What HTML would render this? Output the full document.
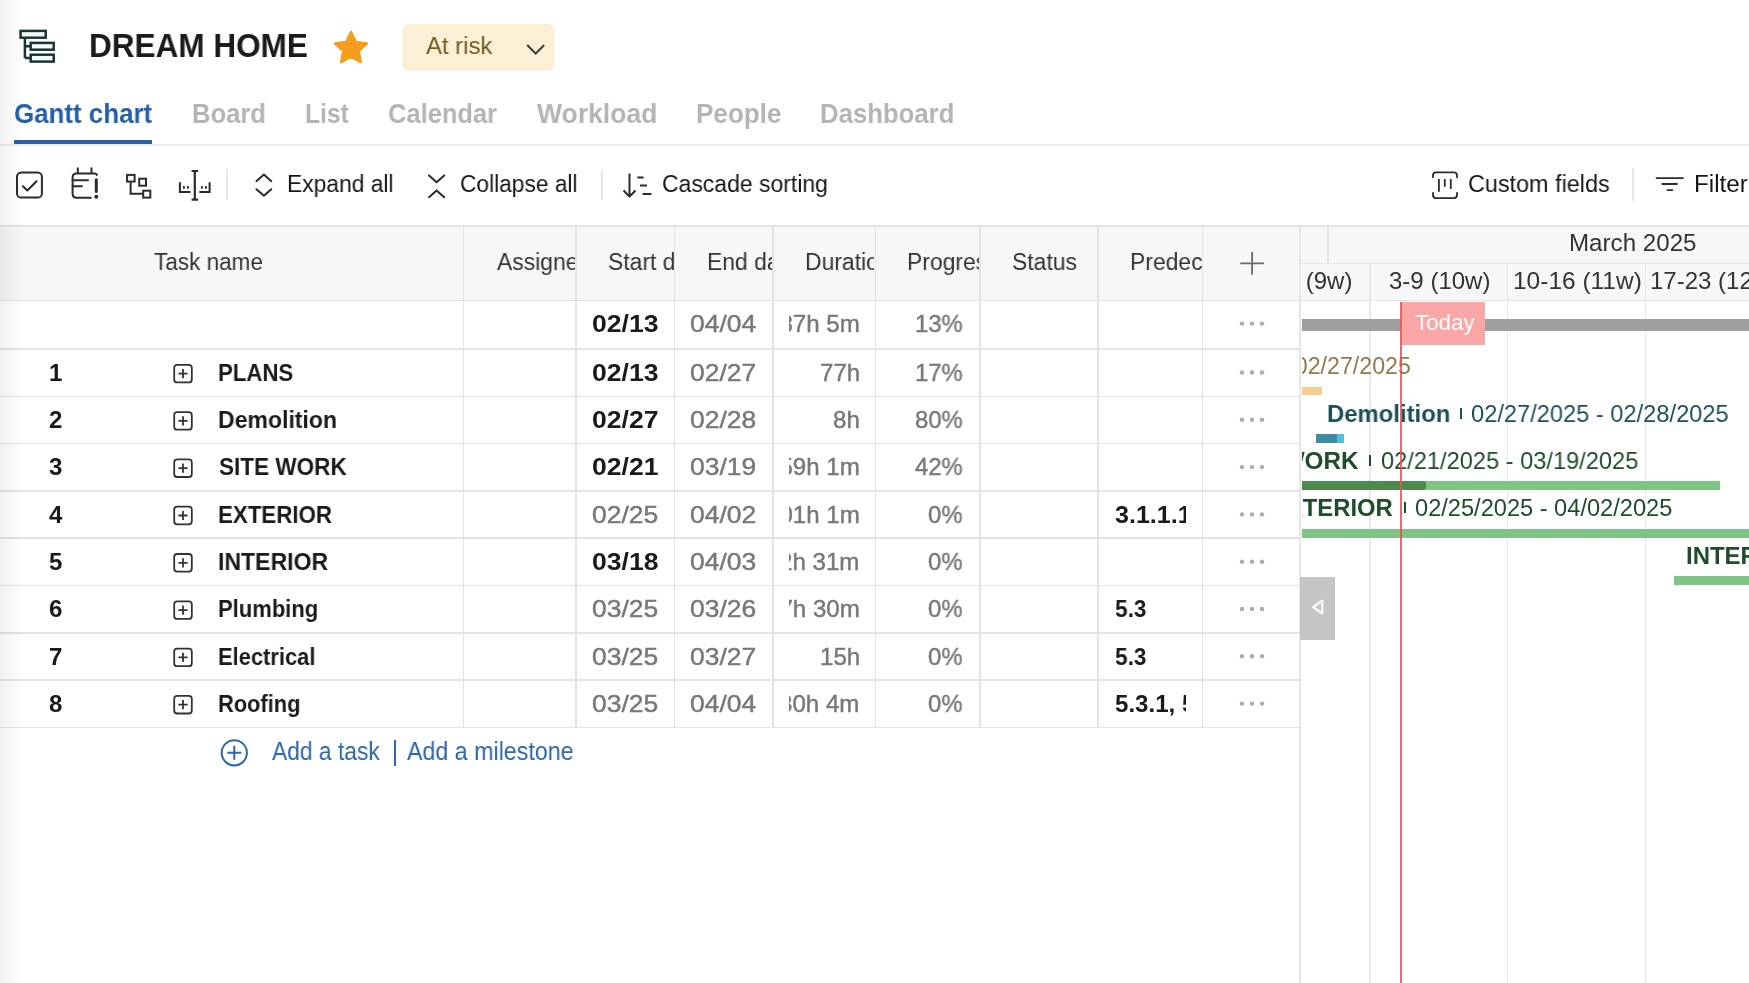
<!DOCTYPE html>
<html><head><meta charset='utf-8'><style>
html,body{margin:0;padding:0;background:#fff;width:1749px;height:983px;overflow:hidden;position:relative}
body{font-family:"Liberation Sans", sans-serif}
.t{position:absolute;white-space:nowrap;transform-origin:0 0;will-change:transform}
</style></head><body>
<div style='position:absolute;left:0.00px;top:226.00px;width:1300.00px;height:74.50px;background:#f7f7f7;'></div><div style='position:absolute;left:1300.00px;top:226.00px;width:449.00px;height:74.50px;background:#f7f7f7;'></div><svg style='position:absolute;left:0;top:0' width='1749' height='983' viewBox='0 0 1749 983'>
<g fill='none' stroke='#1b3434' stroke-width='2.5'>
<rect x='20.6' y='30.9' width='25.1' height='6.8' fill='#f3fafa'/>
<rect x='30.7' y='42.9' width='23.0' height='6.8' fill='#f3fafa'/>
<rect x='30.7' y='54.7' width='23.0' height='6.9' fill='#f3fafa'/>
<path d='M24.9 37.7 V57.9 M24.9 46.3 H30.7 M24.9 57.9 H30.7'/>
</g>
<path d='M351.00 32.00 L355.70 42.13 L366.79 43.47 L358.61 51.07 L360.76 62.03 L351.00 56.60 L341.24 62.03 L343.39 51.07 L335.21 43.47 L346.30 42.13 Z' fill='#f59d1c' stroke='#f59d1c' stroke-width='2.6' stroke-linejoin='round'/>
<rect x='402.3' y='24.1' width='152.3' height='46.7' rx='7' fill='#fbf0d5'/>
<path d='M527.2 45 L535.7 53.6 L544.2 45' fill='none' stroke='#3a3a3a' stroke-width='2'/>
</svg><div class='t' style='left:88.59px;top:29px;font-size:33.28px;line-height:33.28px;font-weight:bold;color:#1b1b1b;transform:scaleX(0.9477);'>DREAM HOME</div><div class='t' style='left:425.55px;top:34px;font-size:24.42px;line-height:24.42px;font-weight:normal;color:#6e5b25;transform:scaleX(0.9792);'>At risk</div><div class='t' style='left:14.04px;top:100px;font-size:27.91px;line-height:27.91px;font-weight:bold;color:#2161aa;transform:scaleX(0.9282);'>Gantt chart</div><div class='t' style='left:191.99px;top:100px;font-size:27.91px;line-height:27.91px;font-weight:bold;color:#b4b4b4;transform:scaleX(0.9166);'>Board</div><div class='t' style='left:304.65px;top:100px;font-size:27.91px;line-height:27.91px;font-weight:bold;color:#b4b4b4;transform:scaleX(0.8837);'>List</div><div class='t' style='left:387.76px;top:100px;font-size:27.91px;line-height:27.91px;font-weight:bold;color:#b4b4b4;transform:scaleX(0.9130);'>Calendar</div><div class='t' style='left:537.17px;top:100px;font-size:27.91px;line-height:27.91px;font-weight:bold;color:#b4b4b4;transform:scaleX(0.9505);'>Workload</div><div class='t' style='left:695.56px;top:100px;font-size:27.91px;line-height:27.91px;font-weight:bold;color:#b4b4b4;transform:scaleX(0.9325);'>People</div><div class='t' style='left:819.88px;top:100px;font-size:27.91px;line-height:27.91px;font-weight:bold;color:#b4b4b4;transform:scaleX(0.9215);'>Dashboard</div><div style='position:absolute;left:13.90px;top:140.10px;width:138.10px;height:3.60px;background:#2562aa;'></div><div style='position:absolute;left:0.00px;top:144.20px;width:1749.00px;height:1.60px;background:#efefef;'></div><svg style='position:absolute;left:0;top:0' width='1749' height='983' viewBox='0 0 1749 983'>
<g fill='none' stroke='#2b2b2b' stroke-width='2' stroke-linecap='round' stroke-linejoin='round'>
<rect x='17' y='172.4' width='24.9' height='25.2' rx='4.2'/>
<path d='M22.9 186.3 L27.3 190.5 L36.6 181.2'/>
<path d='M90.9 197.7 H76.6 Q72.6 197.7 72.6 193.7 V177.4 Q72.6 173.4 76.6 173.4 H95 Q96.8 173.6 96.8 175'/>
<path d='M77.8 168.2 V173 M91.5 168.2 V173 M72.6 180.3 H88 M72.6 186.3 H81.9'/>
<path d='M96.3 179.8 V191.6' stroke-width='3'/>
<circle cx='96.3' cy='196.8' r='2' fill='#2b2b2b' stroke='none'/>
<rect x='127.1' y='174.9' width='7.5' height='6.7' stroke-linecap='butt' stroke-linejoin='miter'/>
<rect x='139.2' y='178.7' width='6.8' height='7' stroke-linecap='butt' stroke-linejoin='miter'/>
<rect x='143.2' y='190.7' width='7.1' height='6.9' stroke-linecap='butt' stroke-linejoin='miter'/>
<path d='M130.6 182.6 V193.7 H143.2' stroke-linecap='butt' stroke-linejoin='miter'/>
<path d='M194.8 171 V199.6 M191.6 171 H198.2 M191.6 199.6 H198.2' stroke-width='2.2' stroke-linecap='butt'/>
<path d='M179.9 182.2 V192 H190.5 M209.6 182.2 V192 H199.3' stroke-linecap='butt' stroke-linejoin='miter'/>
<path d='M183.9 186.1 V188.7 M187.9 186.1 V188.7 M201.9 186.1 V188.7 M205.9 186.1 V188.7' stroke-width='1.8' stroke-linecap='butt'/>
<path d='M256.4 181.2 L263.9 174.6 L271.3 181.2 M256.4 189.2 L263.9 195.8 L271.3 189.2'/>
<path d='M429 175.4 L436.6 182.2 L444.2 175.4 M429 197.2 L436.6 190.4 L444.2 197.2'/>
<path d='M629.5 173.5 V196.5 M623.5 190.5 L629.5 196.5 L635.5 190.5 M637.3 177.4 H643.6 M640 185.6 H647 M642.6 193.9 H651.4' stroke-linecap='butt'/>
<path d='M1433 177.3 V175.4 Q1433 172.4 1436 172.4 H1454 Q1457 172.4 1457 175.4 V177.3 M1433 192.8 V195.1 Q1433 198.1 1436 198.1 H1454 Q1457 198.1 1457 195.1 V192.8' stroke-width='1.8'/>
<path d='M1438.9 179.6 V191 M1444.8 179.6 V186.1 M1450.8 179.6 V188.2' stroke-width='1.8'/>
<path d='M1656.5 178.1 H1683 M1662.3 184 H1677 M1667.5 190.2 H1672.3' stroke-width='1.8'/>
</g>
</svg><div style='position:absolute;left:226.20px;top:168.70px;width:1.80px;height:31.30px;background:#e6e6e6;'></div><div style='position:absolute;left:600.80px;top:170.00px;width:1.80px;height:30.00px;background:#e6e6e6;'></div><div style='position:absolute;left:1632.20px;top:168.10px;width:1.80px;height:32.50px;background:#e6e6e6;'></div><div class='t' style='left:287.13px;top:172px;font-size:23.98px;line-height:23.98px;font-weight:normal;color:#161616;transform:scaleX(0.9518);'>Expand all</div><div class='t' style='left:459.94px;top:172px;font-size:23.98px;line-height:23.98px;font-weight:normal;color:#161616;transform:scaleX(0.9485);'>Collapse all</div><div class='t' style='left:661.83px;top:172px;font-size:23.98px;line-height:23.98px;font-weight:normal;color:#161616;transform:scaleX(0.9581);'>Cascade sorting</div><div class='t' style='left:1467.61px;top:172px;font-size:23.98px;line-height:23.98px;font-weight:normal;color:#161616;transform:scaleX(0.9756);'>Custom fields</div><div class='t' style='left:1693.61px;top:172px;font-size:23.98px;line-height:23.98px;font-weight:normal;color:#161616;transform:scaleX(1.0130);'>Filter</div><div style='position:absolute;left:0.00px;top:225.20px;width:1749.00px;height:1.60px;background:#e4e4e4;'></div><div style='position:absolute;left:0.00px;top:299.80px;width:1300.00px;height:1.60px;background:#e4e4e4;'></div><div style='position:absolute;left:0.00px;top:348.20px;width:1300.00px;height:1.60px;background:#e4e4e4;'></div><div style='position:absolute;left:0.00px;top:395.50px;width:1300.00px;height:1.60px;background:#e4e4e4;'></div><div style='position:absolute;left:0.00px;top:442.80px;width:1300.00px;height:1.60px;background:#e4e4e4;'></div><div style='position:absolute;left:0.00px;top:490.10px;width:1300.00px;height:1.60px;background:#e4e4e4;'></div><div style='position:absolute;left:0.00px;top:537.40px;width:1300.00px;height:1.60px;background:#e4e4e4;'></div><div style='position:absolute;left:0.00px;top:584.70px;width:1300.00px;height:1.60px;background:#e4e4e4;'></div><div style='position:absolute;left:0.00px;top:632.00px;width:1300.00px;height:1.60px;background:#e4e4e4;'></div><div style='position:absolute;left:0.00px;top:679.30px;width:1300.00px;height:1.60px;background:#e4e4e4;'></div><div style='position:absolute;left:0.00px;top:726.60px;width:1300.00px;height:1.60px;background:#e4e4e4;'></div><div style='position:absolute;left:462.70px;top:226.00px;width:1.60px;height:502.20px;background:#e4e4e4;'></div><div style='position:absolute;left:575.20px;top:226.00px;width:1.60px;height:502.20px;background:#e4e4e4;'></div><div style='position:absolute;left:673.70px;top:226.00px;width:1.60px;height:502.20px;background:#e4e4e4;'></div><div style='position:absolute;left:772.20px;top:226.00px;width:1.60px;height:502.20px;background:#e4e4e4;'></div><div style='position:absolute;left:874.50px;top:226.00px;width:1.60px;height:502.20px;background:#e4e4e4;'></div><div style='position:absolute;left:979.20px;top:226.00px;width:1.60px;height:502.20px;background:#e4e4e4;'></div><div style='position:absolute;left:1097.00px;top:226.00px;width:1.60px;height:502.20px;background:#e4e4e4;'></div><div style='position:absolute;left:1201.70px;top:226.00px;width:1.60px;height:502.20px;background:#e4e4e4;'></div><div style='position:absolute;left:1299.30px;top:226.00px;width:2.20px;height:757.00px;background:#e6e6e6;'></div><div class='t' style='left:153.50px;top:250px;font-size:24.42px;line-height:24.42px;font-weight:normal;color:#333;transform:scaleX(0.9231);'>Task name</div><div class='t' style='left:1012.17px;top:250px;font-size:24.42px;line-height:24.42px;font-weight:normal;color:#333;transform:scaleX(0.9383);'>Status</div><div style='position:absolute;left:464.4px;top:226px;width:110.70000000000005px;height:74px;overflow:hidden'><div style='position:absolute;left:-464.4px;top:-226px'><div class='t' style='left:496.85px;top:250px;font-size:24.42px;line-height:24.42px;font-weight:normal;color:#333;transform:scaleX(0.9383);'>Assignee</div></div></div><div style='position:absolute;left:576.9px;top:226px;width:96.70000000000005px;height:74px;overflow:hidden'><div style='position:absolute;left:-576.9px;top:-226px'><div class='t' style='left:608.27px;top:250px;font-size:24.42px;line-height:24.42px;font-weight:normal;color:#333;transform:scaleX(0.9383);'>Start date</div></div></div><div style='position:absolute;left:675.4px;top:226px;width:96.70000000000005px;height:74px;overflow:hidden'><div style='position:absolute;left:-675.4px;top:-226px'><div class='t' style='left:706.62px;top:250px;font-size:24.42px;line-height:24.42px;font-weight:normal;color:#333;transform:scaleX(0.9383);'>End date</div></div></div><div style='position:absolute;left:773.9px;top:226px;width:100.5px;height:74px;overflow:hidden'><div style='position:absolute;left:-773.9px;top:-226px'><div class='t' style='left:804.82px;top:250px;font-size:24.42px;line-height:24.42px;font-weight:normal;color:#333;transform:scaleX(0.9383);'>Duration</div></div></div><div style='position:absolute;left:876.2px;top:226px;width:102.89999999999998px;height:74px;overflow:hidden'><div style='position:absolute;left:-876.2px;top:-226px'><div class='t' style='left:907.32px;top:250px;font-size:24.42px;line-height:24.42px;font-weight:normal;color:#333;transform:scaleX(0.9383);'>Progress</div></div></div><div style='position:absolute;left:1098.7px;top:226px;width:102.89999999999986px;height:74px;overflow:hidden'><div style='position:absolute;left:-1098.7px;top:-226px'><div class='t' style='left:1129.82px;top:250px;font-size:24.42px;line-height:24.42px;font-weight:normal;color:#333;transform:scaleX(0.9383);'>Predecessors</div></div></div><svg style='position:absolute;left:0;top:0' width='1749' height='983' viewBox='0 0 1749 983'><g stroke='#6a6a6a' stroke-width='1.8'><path d='M1240.2 263.4 H1264 M1252.1 252 V274.8'/></g></svg><div class='t' style='left:592.16px;top:312px;font-size:24.10px;line-height:24.10px;font-weight:bold;color:#1a1a1a;transform:scaleX(1.1027);'>02/13</div><div class='t' style='left:690.47px;top:312px;font-size:24.10px;line-height:24.10px;font-weight:normal;color:#787878;transform:scaleX(1.0979);-webkit-text-stroke:0.45px #787878;'>04/04</div><div style='position:absolute;left:789px;top:301px;width:85.39999999999998px;height:48.0px;overflow:hidden'><div style='position:absolute;left:-789px;top:-301px'><div class='t' style='left:765.99px;top:312px;font-size:24.10px;line-height:24.10px;font-weight:normal;color:#787878;-webkit-text-stroke:0.45px #787878;'>287h 5m</div></div></div><div class='t' style='left:915.19px;top:312px;font-size:24.10px;line-height:24.10px;font-weight:normal;color:#787878;transform:scaleX(0.9879);-webkit-text-stroke:0.45px #787878;'>13%</div><div class='t' style='left:48.58px;top:361px;font-size:24.10px;line-height:24.10px;font-weight:bold;color:#1a1a1a;'>1</div><div class='t' style='left:218.11px;top:361px;font-size:24.10px;line-height:24.10px;font-weight:bold;color:#1a1a1a;transform:scaleX(0.9214);'>PLANS</div><div class='t' style='left:592.16px;top:361px;font-size:24.10px;line-height:24.10px;font-weight:bold;color:#1a1a1a;transform:scaleX(1.1027);'>02/13</div><div class='t' style='left:690.47px;top:361px;font-size:24.10px;line-height:24.10px;font-weight:normal;color:#787878;transform:scaleX(1.0979);-webkit-text-stroke:0.45px #787878;'>02/27</div><div style='position:absolute;left:789px;top:349.0px;width:85.39999999999998px;height:47.30000000000001px;overflow:hidden'><div style='position:absolute;left:-789px;top:-349.0px'><div class='t' style='left:819.57px;top:361px;font-size:24.10px;line-height:24.10px;font-weight:normal;color:#787878;-webkit-text-stroke:0.45px #787878;'>77h</div></div></div><div class='t' style='left:915.19px;top:361px;font-size:24.10px;line-height:24.10px;font-weight:normal;color:#787878;transform:scaleX(0.9879);-webkit-text-stroke:0.45px #787878;'>17%</div><div class='t' style='left:49.06px;top:408px;font-size:24.10px;line-height:24.10px;font-weight:bold;color:#1a1a1a;'>2</div><div class='t' style='left:218.06px;top:408px;font-size:24.10px;line-height:24.10px;font-weight:bold;color:#1a1a1a;transform:scaleX(0.9562);'>Demolition</div><div class='t' style='left:592.16px;top:408px;font-size:24.10px;line-height:24.10px;font-weight:bold;color:#1a1a1a;transform:scaleX(1.1027);'>02/27</div><div class='t' style='left:690.47px;top:408px;font-size:24.10px;line-height:24.10px;font-weight:normal;color:#787878;transform:scaleX(1.0979);-webkit-text-stroke:0.45px #787878;'>02/28</div><div style='position:absolute;left:789px;top:396.3px;width:85.39999999999998px;height:47.30000000000001px;overflow:hidden'><div style='position:absolute;left:-789px;top:-396.3px'><div class='t' style='left:832.97px;top:408px;font-size:24.10px;line-height:24.10px;font-weight:normal;color:#787878;-webkit-text-stroke:0.45px #787878;'>8h</div></div></div><div class='t' style='left:915.19px;top:408px;font-size:24.10px;line-height:24.10px;font-weight:normal;color:#787878;transform:scaleX(0.9879);-webkit-text-stroke:0.45px #787878;'>80%</div><div class='t' style='left:49.16px;top:455px;font-size:24.10px;line-height:24.10px;font-weight:bold;color:#1a1a1a;'>3</div><div class='t' style='left:218.95px;top:455px;font-size:24.10px;line-height:24.10px;font-weight:bold;color:#1a1a1a;transform:scaleX(0.9349);'>SITE WORK</div><div class='t' style='left:592.16px;top:455px;font-size:24.10px;line-height:24.10px;font-weight:bold;color:#1a1a1a;transform:scaleX(1.1027);'>02/21</div><div class='t' style='left:690.47px;top:455px;font-size:24.10px;line-height:24.10px;font-weight:normal;color:#787878;transform:scaleX(1.0979);-webkit-text-stroke:0.45px #787878;'>03/19</div><div style='position:absolute;left:789px;top:443.6px;width:85.39999999999998px;height:47.299999999999955px;overflow:hidden'><div style='position:absolute;left:-789px;top:-443.6px'><div class='t' style='left:765.99px;top:455px;font-size:24.10px;line-height:24.10px;font-weight:normal;color:#787878;-webkit-text-stroke:0.45px #787878;'>159h 1m</div></div></div><div class='t' style='left:915.19px;top:455px;font-size:24.10px;line-height:24.10px;font-weight:normal;color:#787878;transform:scaleX(0.9879);-webkit-text-stroke:0.45px #787878;'>42%</div><div class='t' style='left:48.88px;top:503px;font-size:24.10px;line-height:24.10px;font-weight:bold;color:#1a1a1a;'>4</div><div class='t' style='left:218.11px;top:503px;font-size:24.10px;line-height:24.10px;font-weight:bold;color:#1a1a1a;transform:scaleX(0.9258);'>EXTERIOR</div><div class='t' style='left:592.17px;top:503px;font-size:24.10px;line-height:24.10px;font-weight:normal;color:#787878;transform:scaleX(1.0979);-webkit-text-stroke:0.45px #787878;'>02/25</div><div class='t' style='left:690.47px;top:503px;font-size:24.10px;line-height:24.10px;font-weight:normal;color:#787878;transform:scaleX(1.0979);-webkit-text-stroke:0.45px #787878;'>04/02</div><div style='position:absolute;left:789px;top:490.9px;width:85.39999999999998px;height:47.30000000000007px;overflow:hidden'><div style='position:absolute;left:-789px;top:-490.9px'><div class='t' style='left:765.99px;top:503px;font-size:24.10px;line-height:24.10px;font-weight:normal;color:#787878;-webkit-text-stroke:0.45px #787878;'>201h 1m</div></div></div><div class='t' style='left:928.43px;top:503px;font-size:24.10px;line-height:24.10px;font-weight:normal;color:#787878;transform:scaleX(0.9879);-webkit-text-stroke:0.45px #787878;'>0%</div><div style='position:absolute;left:1098.7px;top:490.9px;width:87.79999999999995px;height:47.30000000000007px;overflow:hidden'><div style='position:absolute;left:-1098.7px;top:-490.9px'><div class='t' style='left:1114.92px;top:503px;font-size:24.10px;line-height:24.10px;font-weight:bold;color:#1a1a1a;transform:scaleX(1.0400);'>3.1.1.1</div></div></div><div class='t' style='left:48.96px;top:550px;font-size:24.10px;line-height:24.10px;font-weight:bold;color:#1a1a1a;'>5</div><div class='t' style='left:218.06px;top:550px;font-size:24.10px;line-height:24.10px;font-weight:bold;color:#1a1a1a;transform:scaleX(0.9564);'>INTERIOR</div><div class='t' style='left:592.16px;top:550px;font-size:24.10px;line-height:24.10px;font-weight:bold;color:#1a1a1a;transform:scaleX(1.1027);'>03/18</div><div class='t' style='left:690.47px;top:550px;font-size:24.10px;line-height:24.10px;font-weight:normal;color:#787878;transform:scaleX(1.0979);-webkit-text-stroke:0.45px #787878;'>04/03</div><div style='position:absolute;left:789px;top:538.2px;width:85.39999999999998px;height:47.299999999999955px;overflow:hidden'><div style='position:absolute;left:-789px;top:-538.2px'><div class='t' style='left:754.38px;top:550px;font-size:24.10px;line-height:24.10px;font-weight:normal;color:#787878;-webkit-text-stroke:0.45px #787878;'>112h 31m</div></div></div><div class='t' style='left:928.43px;top:550px;font-size:24.10px;line-height:24.10px;font-weight:normal;color:#787878;transform:scaleX(0.9879);-webkit-text-stroke:0.45px #787878;'>0%</div><div class='t' style='left:48.99px;top:597px;font-size:24.10px;line-height:24.10px;font-weight:bold;color:#1a1a1a;'>6</div><div class='t' style='left:218.13px;top:597px;font-size:24.10px;line-height:24.10px;font-weight:bold;color:#1a1a1a;transform:scaleX(0.9132);'>Plumbing</div><div class='t' style='left:592.17px;top:597px;font-size:24.10px;line-height:24.10px;font-weight:normal;color:#787878;transform:scaleX(1.0979);-webkit-text-stroke:0.45px #787878;'>03/25</div><div class='t' style='left:690.47px;top:597px;font-size:24.10px;line-height:24.10px;font-weight:normal;color:#787878;transform:scaleX(1.0979);-webkit-text-stroke:0.45px #787878;'>03/26</div><div style='position:absolute;left:789px;top:585.5px;width:85.39999999999998px;height:47.299999999999955px;overflow:hidden'><div style='position:absolute;left:-789px;top:-585.5px'><div class='t' style='left:765.99px;top:597px;font-size:24.10px;line-height:24.10px;font-weight:normal;color:#787878;-webkit-text-stroke:0.45px #787878;'>17h 30m</div></div></div><div class='t' style='left:928.43px;top:597px;font-size:24.10px;line-height:24.10px;font-weight:normal;color:#787878;transform:scaleX(0.9879);-webkit-text-stroke:0.45px #787878;'>0%</div><div style='position:absolute;left:1098.7px;top:585.5px;width:87.79999999999995px;height:47.299999999999955px;overflow:hidden'><div style='position:absolute;left:-1098.7px;top:-585.5px'><div class='t' style='left:1114.80px;top:597px;font-size:24.10px;line-height:24.10px;font-weight:bold;color:#1a1a1a;transform:scaleX(0.9400);'>5.3</div></div></div><div class='t' style='left:49.01px;top:645px;font-size:24.10px;line-height:24.10px;font-weight:bold;color:#1a1a1a;'>7</div><div class='t' style='left:218.13px;top:645px;font-size:24.10px;line-height:24.10px;font-weight:bold;color:#1a1a1a;transform:scaleX(0.9090);'>Electrical</div><div class='t' style='left:592.17px;top:645px;font-size:24.10px;line-height:24.10px;font-weight:normal;color:#787878;transform:scaleX(1.0979);-webkit-text-stroke:0.45px #787878;'>03/25</div><div class='t' style='left:690.47px;top:645px;font-size:24.10px;line-height:24.10px;font-weight:normal;color:#787878;transform:scaleX(1.0979);-webkit-text-stroke:0.45px #787878;'>03/27</div><div style='position:absolute;left:789px;top:632.8px;width:85.39999999999998px;height:47.299999999999955px;overflow:hidden'><div style='position:absolute;left:-789px;top:-632.8px'><div class='t' style='left:819.57px;top:645px;font-size:24.10px;line-height:24.10px;font-weight:normal;color:#787878;-webkit-text-stroke:0.45px #787878;'>15h</div></div></div><div class='t' style='left:928.43px;top:645px;font-size:24.10px;line-height:24.10px;font-weight:normal;color:#787878;transform:scaleX(0.9879);-webkit-text-stroke:0.45px #787878;'>0%</div><div style='position:absolute;left:1098.7px;top:632.8px;width:87.79999999999995px;height:47.299999999999955px;overflow:hidden'><div style='position:absolute;left:-1098.7px;top:-632.8px'><div class='t' style='left:1114.80px;top:645px;font-size:24.10px;line-height:24.10px;font-weight:bold;color:#1a1a1a;transform:scaleX(0.9400);'>5.3</div></div></div><div class='t' style='left:48.99px;top:692px;font-size:24.10px;line-height:24.10px;font-weight:bold;color:#1a1a1a;'>8</div><div class='t' style='left:218.14px;top:692px;font-size:24.10px;line-height:24.10px;font-weight:bold;color:#1a1a1a;transform:scaleX(0.9066);'>Roofing</div><div class='t' style='left:592.17px;top:692px;font-size:24.10px;line-height:24.10px;font-weight:normal;color:#787878;transform:scaleX(1.0979);-webkit-text-stroke:0.45px #787878;'>03/25</div><div class='t' style='left:690.47px;top:692px;font-size:24.10px;line-height:24.10px;font-weight:normal;color:#787878;transform:scaleX(1.0979);-webkit-text-stroke:0.45px #787878;'>04/04</div><div style='position:absolute;left:789px;top:680.0999999999999px;width:85.39999999999998px;height:47.30000000000007px;overflow:hidden'><div style='position:absolute;left:-789px;top:-680.0999999999999px'><div class='t' style='left:779.42px;top:692px;font-size:24.10px;line-height:24.10px;font-weight:normal;color:#787878;-webkit-text-stroke:0.45px #787878;'>80h 4m</div></div></div><div class='t' style='left:928.43px;top:692px;font-size:24.10px;line-height:24.10px;font-weight:normal;color:#787878;transform:scaleX(0.9879);-webkit-text-stroke:0.45px #787878;'>0%</div><div style='position:absolute;left:1098.7px;top:680.0999999999999px;width:87.79999999999995px;height:47.30000000000007px;overflow:hidden'><div style='position:absolute;left:-1098.7px;top:-680.0999999999999px'><div class='t' style='left:1114.75px;top:692px;font-size:24.10px;line-height:24.10px;font-weight:bold;color:#1a1a1a;'>5.3.1, 5.3.2</div></div></div><svg style='position:absolute;left:0;top:0' width='1749' height='983' viewBox='0 0 1749 983'><g fill='none' stroke='#333' stroke-width='1.8'><rect x='174.2' y='364.8' width='17.6' height='17.6' rx='3'/><path d='M178.4 373.6 H187.6 M183 369.0 V378.2'/><rect x='174.2' y='412.1' width='17.6' height='17.6' rx='3'/><path d='M178.4 420.9 H187.6 M183 416.3 V425.5'/><rect x='174.2' y='459.4' width='17.6' height='17.6' rx='3'/><path d='M178.4 468.2 H187.6 M183 463.6 V472.8'/><rect x='174.2' y='506.7' width='17.6' height='17.6' rx='3'/><path d='M178.4 515.5 H187.6 M183 510.9 V520.1'/><rect x='174.2' y='554.0' width='17.6' height='17.6' rx='3'/><path d='M178.4 562.8 H187.6 M183 558.2 V567.4'/><rect x='174.2' y='601.3' width='17.6' height='17.6' rx='3'/><path d='M178.4 610.1 H187.6 M183 605.5 V614.7'/><rect x='174.2' y='648.6' width='17.6' height='17.6' rx='3'/><path d='M178.4 657.4 H187.6 M183 652.8 V662.0'/><rect x='174.2' y='695.9' width='17.6' height='17.6' rx='3'/><path d='M178.4 704.7 H187.6 M183 700.1 V709.3'/></g><g fill='#ababab'><circle cx='1242' cy='323.6' r='2.2'/><circle cx='1252' cy='323.6' r='2.2'/><circle cx='1262' cy='323.6' r='2.2'/><circle cx='1242' cy='372.5' r='2.2'/><circle cx='1252' cy='372.5' r='2.2'/><circle cx='1262' cy='372.5' r='2.2'/><circle cx='1242' cy='419.8' r='2.2'/><circle cx='1252' cy='419.8' r='2.2'/><circle cx='1262' cy='419.8' r='2.2'/><circle cx='1242' cy='467.1' r='2.2'/><circle cx='1252' cy='467.1' r='2.2'/><circle cx='1262' cy='467.1' r='2.2'/><circle cx='1242' cy='514.4' r='2.2'/><circle cx='1252' cy='514.4' r='2.2'/><circle cx='1262' cy='514.4' r='2.2'/><circle cx='1242' cy='561.7' r='2.2'/><circle cx='1252' cy='561.7' r='2.2'/><circle cx='1262' cy='561.7' r='2.2'/><circle cx='1242' cy='609.0' r='2.2'/><circle cx='1252' cy='609.0' r='2.2'/><circle cx='1262' cy='609.0' r='2.2'/><circle cx='1242' cy='656.3' r='2.2'/><circle cx='1252' cy='656.3' r='2.2'/><circle cx='1262' cy='656.3' r='2.2'/><circle cx='1242' cy='703.6' r='2.2'/><circle cx='1252' cy='703.6' r='2.2'/><circle cx='1262' cy='703.6' r='2.2'/></g></svg><svg style='position:absolute;left:0;top:0' width='1749' height='983' viewBox='0 0 1749 983'><g fill='none' stroke='#2b67ae' stroke-width='2'><circle cx='234.3' cy='752.8' r='12.6'/><path d='M227.3 752.8 H241.3 M234.3 745.8 V759.8'/></g></svg><div style='position:absolute;left:394.40px;top:739.50px;width:2.00px;height:26.50px;background:#2b67ae;'></div><div class='t' style='left:272.15px;top:739px;font-size:25.58px;line-height:25.58px;font-weight:normal;color:#2b67ae;transform:scaleX(0.8920);'>Add a task</div><div class='t' style='left:406.95px;top:739px;font-size:25.58px;line-height:25.58px;font-weight:normal;color:#2b67ae;transform:scaleX(0.9080);'>Add a milestone</div><div style='position:absolute;left:1327.30px;top:226.00px;width:1.60px;height:37.50px;background:#e4e4e4;'></div><div style='position:absolute;left:1300.00px;top:262.70px;width:449.00px;height:1.60px;background:#e4e4e4;'></div><div style='position:absolute;left:1369.30px;top:263.00px;width:1.60px;height:720.00px;background:#e8e8e8;'></div><div style='position:absolute;left:1506.80px;top:263.00px;width:1.60px;height:720.00px;background:#e8e8e8;'></div><div style='position:absolute;left:1644.60px;top:263.00px;width:1.60px;height:720.00px;background:#e8e8e8;'></div><div style='position:absolute;left:1300.00px;top:299.80px;width:449.00px;height:1.60px;background:#e4e4e4;'></div><div class='t' style='left:1568.92px;top:232px;font-size:23.55px;line-height:23.55px;font-weight:normal;color:#333;transform:scaleX(1.0253);'>March 2025</div><div class='t' style='left:1388.59px;top:270px;font-size:23.64px;line-height:23.64px;font-weight:normal;color:#333;transform:scaleX(1.0165);'>3-9 (10w)</div><div class='t' style='left:1513.14px;top:270px;font-size:23.64px;line-height:23.64px;font-weight:normal;color:#333;transform:scaleX(1.0361);'>10-16 (11w)</div><div class='t' style='left:1650.17px;top:270px;font-size:23.64px;line-height:23.64px;font-weight:normal;color:#333;transform:scaleX(1.0165);'>17-23 (12w)</div><div style='position:absolute;left:1301.5px;top:264.4px;width:67.70000000000005px;height:35.30000000000001px;overflow:hidden'><div style='position:absolute;left:-1301.5px;top:-264.4px'><div class='t' style='left:1250.99px;top:270px;font-size:23.64px;line-height:23.64px;font-weight:normal;color:#333;transform:scaleX(1.0165);'>24-2 (9w)</div></div></div><div style='position:absolute;left:1301.50px;top:318.80px;width:447.50px;height:12.10px;background:#9f9f9f;'></div><div style='position:absolute;left:1301.50px;top:386.70px;width:20.20px;height:8.70px;background:#f6ce8d;'></div><div style='position:absolute;left:1315.80px;top:433.90px;width:27.80px;height:8.80px;background:#52c0d8;'></div><div style='position:absolute;left:1315.80px;top:433.90px;width:21.60px;height:8.80px;background:#3f8ba2;'></div><div style='position:absolute;left:1301.50px;top:481.00px;width:418.20px;height:9.00px;background:#7ec483;'></div><div style='position:absolute;left:1301.50px;top:481.00px;width:124.50px;height:9.00px;background:#4b8a4c;border-radius:0 3px 3px 0;'></div><div style='position:absolute;left:1301.50px;top:528.50px;width:447.50px;height:9.20px;background:#80c485;'></div><div style='position:absolute;left:1674.20px;top:575.90px;width:74.80px;height:8.90px;background:#80c485;'></div><div style='position:absolute;left:1301.5px;top:301.6px;width:447.5px;height:681.4px;overflow:hidden'><div style='position:absolute;left:-1301.5px;top:-301.6px'><div class='t' style='left:1063.40px;top:355px;font-size:23.21px;line-height:23.21px;font-weight:normal;color:#8f7b4d;'>PLANS | 02/13/2025 - 02/27/2025</div></div></div><div class='t' style='left:1327.00px;top:402px;font-size:24.13px;line-height:24.13px;font-weight:bold;color:#1d4f57;transform:scaleX(0.9888);'>Demolition</div><div style='position:absolute;left:1460.00px;top:408.00px;width:2.00px;height:11.00px;background:#1d4f57;'></div><div class='t' style='left:1471.48px;top:402px;font-size:23.78px;line-height:23.78px;font-weight:normal;color:#1d4f57;transform:scaleX(0.9947);'>02/27/2025 - 02/28/2025</div><div style='position:absolute;left:1301.5px;top:301.6px;width:447.5px;height:681.4px;overflow:hidden'><div style='position:absolute;left:-1301.5px;top:-301.6px'><div class='t' style='left:1221.49px;top:449px;font-size:24.27px;line-height:24.27px;font-weight:bold;color:#1f4c2b;'>SITE WORK</div></div></div><div style='position:absolute;left:1369.00px;top:455.00px;width:2.00px;height:11.00px;background:#1f4c2b;'></div><div class='t' style='left:1381.18px;top:449px;font-size:23.93px;line-height:23.93px;font-weight:normal;color:#1f4c2b;transform:scaleX(0.9869);'>02/21/2025 - 03/19/2025</div><div style='position:absolute;left:1301.5px;top:301.6px;width:447.5px;height:681.4px;overflow:hidden'><div style='position:absolute;left:-1301.5px;top:-301.6px'><div class='t' style='left:1271.34px;top:496px;font-size:23.84px;line-height:23.84px;font-weight:bold;color:#1f4c2b;'>EXTERIOR</div></div></div><div style='position:absolute;left:1404.00px;top:502.00px;width:2.00px;height:11.00px;background:#1f4c2b;'></div><div class='t' style='left:1415.48px;top:497px;font-size:23.50px;line-height:23.50px;font-weight:normal;color:#1f4c2b;transform:scaleX(1.0045);'>02/25/2025 - 04/02/2025</div><div style='position:absolute;left:1301.5px;top:301.6px;width:447.5px;height:681.4px;overflow:hidden'><div style='position:absolute;left:-1301.5px;top:-301.6px'><div class='t' style='left:1686.09px;top:544px;font-size:23.98px;line-height:23.98px;font-weight:bold;color:#1f4c2b;'>INTERIOR</div></div></div><div style='position:absolute;left:1401.10px;top:302.00px;width:83.80px;height:42.60px;background:#f9a6a6;'></div><div class='t' style='left:1414.91px;top:311px;font-size:22.97px;line-height:22.97px;font-weight:normal;color:#ffffff;transform:scaleX(0.9733);'>Today</div><div style='position:absolute;left:1400.30px;top:302.00px;width:2.00px;height:681.00px;background:rgba(226,84,84,0.85);'></div><div style='position:absolute;left:1300.00px;top:577.30px;width:35.40px;height:62.70px;background:#c5c5c5;'></div><svg style='position:absolute;left:0;top:0' width='1749' height='983' viewBox='0 0 1749 983'><path d='M1322.3 600.6 V613.6 L1313.2 607.1 Z' fill='none' stroke='#fff' stroke-width='2' stroke-linejoin='round'/></svg><div style='position:absolute;left:0.00px;top:0.00px;width:24.00px;height:983.00px;background:linear-gradient(to right, rgba(0,0,0,0.055), rgba(0,0,0,0));'></div>
</body></html>
